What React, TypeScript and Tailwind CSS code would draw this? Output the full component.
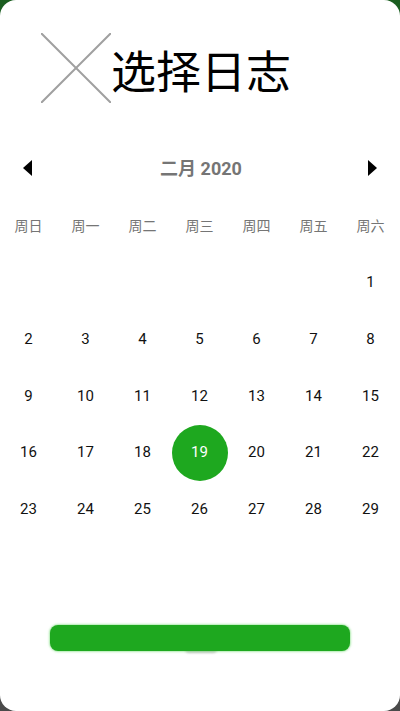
import React from "react";

const weekdays = ["周日", "周一", "周二", "周三", "周四", "周五", "周六"];

export default function App() {
  const cells: (number | null)[] = [null, null, null, null, null, null];
  for (let d = 1; d <= 29; d++) cells.push(d);
  const rows: (number | null)[][] = [];
  for (let i = 0; i < cells.length; i += 7) rows.push(cells.slice(i, i + 7));

  return (
    <div
      className="w-[400px] h-[711px] bg-[linear-gradient(to_bottom,#1b5e20_0%,#1b5e20_50%,#4a4a4a_50%,#4a4a4a_100%)]"
      style={{ fontFamily: "Roboto, 'Noto Sans CJK SC', sans-serif" }}
    >
      <div className="w-[400px] h-[711px] bg-white rounded-[16px] flex flex-col">
        <div className="pt-[33px] pl-[41px] flex items-center h-[103px]">
          <svg width="70" height="70" viewBox="0 0 70 70">
            <line x1="0" y1="0" x2="70" y2="70" stroke="#a0a0a0" strokeWidth="2" />
            <line x1="70" y1="0" x2="0" y2="70" stroke="#a0a0a0" strokeWidth="2" />
          </svg>
          <div className="text-[45px] leading-none text-black mt-[3px]" style={{ fontFamily: "'Noto Sans CJK SC', sans-serif" }}>
            选择日志
          </div>
        </div>

        <div className="mt-[50px] h-[30px] flex items-center justify-between px-[23px]">
          <svg width="9" height="16" viewBox="0 0 9 16">
            <polygon points="9,0 9,16 0,8" fill="#000" />
          </svg>
          <div className="text-[18px] font-bold text-[#757575] ml-[2px]">二月 2020</div>
          <svg width="9" height="16" viewBox="0 0 9 16">
            <polygon points="0,0 0,16 9,8" fill="#000" />
          </svg>
        </div>

        <div className="mt-[14px] grid grid-cols-[repeat(7,57px)] h-[57px] items-center">
          {weekdays.map((w) => (
            <div key={w} className="text-center text-[14px] text-[#757575]" style={{ fontFamily: "'Noto Sans CJK SC', sans-serif" }}>
              {w}
            </div>
          ))}
        </div>

        <div className="flex flex-col">
          {rows.map((r, i) => (
            <div key={i} className="grid grid-cols-[repeat(7,57px)] h-[56.75px]">
              {Array.from({ length: 7 }).map((_, j) => {
                const d = r[j];
                return (
                  <div key={j} className="flex items-center justify-center">
                    {d === 19 ? (
                      <div className="w-[56px] h-[56px] rounded-full bg-[#1ea81f] flex items-center justify-center text-white text-[15px]">
                        19
                      </div>
                    ) : d ? (
                      <span className="text-[15px] text-[#111]">{d}</span>
                    ) : null}
                  </div>
                );
              })}
            </div>
          ))}
        </div>

        <div className="flex-1" />
        <div className="relative mx-[50px] mb-[60px] h-[26px]">
          <div className="absolute left-[135px] top-[20px] w-[32px] h-[8px] rounded-full bg-[#9e9e9e] opacity-60 blur-[1px]" />
          <div className="absolute inset-0 rounded-[8px] bg-[#1ea81f] shadow-[0_0_2px_1px_rgba(120,220,120,0.6)]" />
        </div>
      </div>
    </div>
  );
}
